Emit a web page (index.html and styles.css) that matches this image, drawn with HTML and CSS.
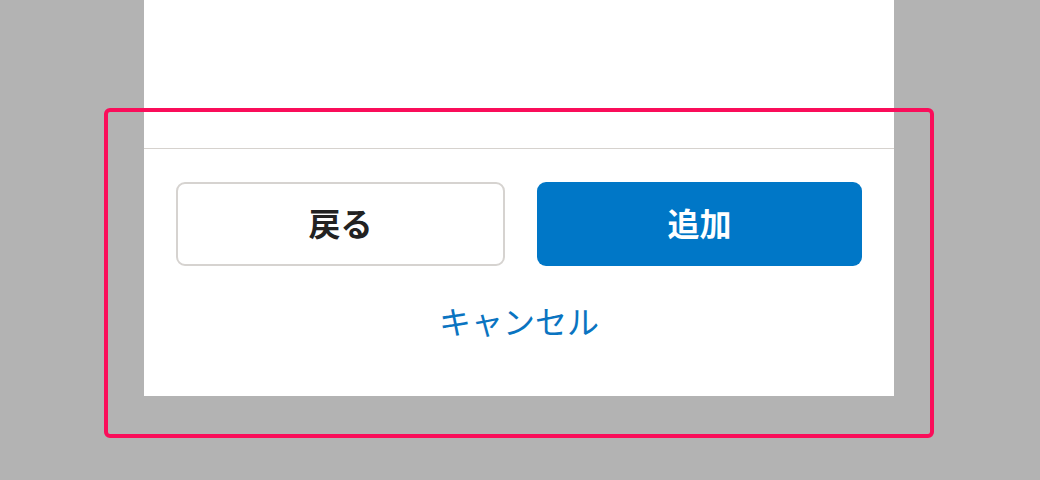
FILE: index.html
```html
<!doctype html>
<html lang="ja">
<head>
<meta charset="utf-8">
<title>追加</title>
<link rel="stylesheet" href="styles.css">
</head>
<body>
<div id="sheet">
  <div id="sheetBody"></div>
  <div id="sheetFooter">
    <div id="buttonRow">
      <button class="btn btnBack">戻る</button>
      <button class="btn btnAdd">追加</button>
    </div>
    <a id="cancelLink" href="#">キャンセル</a>
  </div>
</div>
<div id="highlight"></div>
</body>
</html>
```

FILE: styles.css
```css
html, body {
  margin: 0;
  padding: 0;
  width: 100%;
  height: 100%;
  background-color: #b3b3b3;
  overflow: hidden;
  font-family: 'Noto Sans CJK JP', 'Noto Sans', sans-serif;
}

* {
  box-sizing: border-box;
}

#sheet {
  width: 750px;
  height: 396px;
  margin-left: 144px;
  background-color: white;
  display: flex;
  flex-direction: column;
}

#sheetBody {
  height: 148px;
}

#sheetFooter {
  border-top: 1px solid #d6d2ce;
  padding: 33px 32px 0 32px;
  display: flex;
  flex-direction: column;
  align-items: center;
}

#buttonRow {
  width: 100%;
  display: flex;
  gap: 32px;
}

.btn {
  flex: 1 1 0;
  margin: 0;
  height: 84px;
  padding: 0 0 4px 0;
  border-radius: 9px;
  font-family: 'Noto Sans CJK JP', sans-serif;
  font-size: 32px;
  font-weight: bold;
  cursor: pointer;
}

.btnBack {
  background: white;
  color: #222;
  border: 2px solid #d6d3d0;
}

.btnAdd {
  background: #0077c7;
  color: white;
  border: none;
}

#cancelLink {
  margin-top: 30px;
  font-size: 32px;
  line-height: 48px;
  color: #0a74c1;
  text-decoration: none;
}

#highlight {
  position: absolute;
  left: 104px;
  top: 108px;
  width: 830px;
  height: 330px;
  border: 4px solid #fa0d5a;
  border-radius: 6px;
  pointer-events: none;
}
```
